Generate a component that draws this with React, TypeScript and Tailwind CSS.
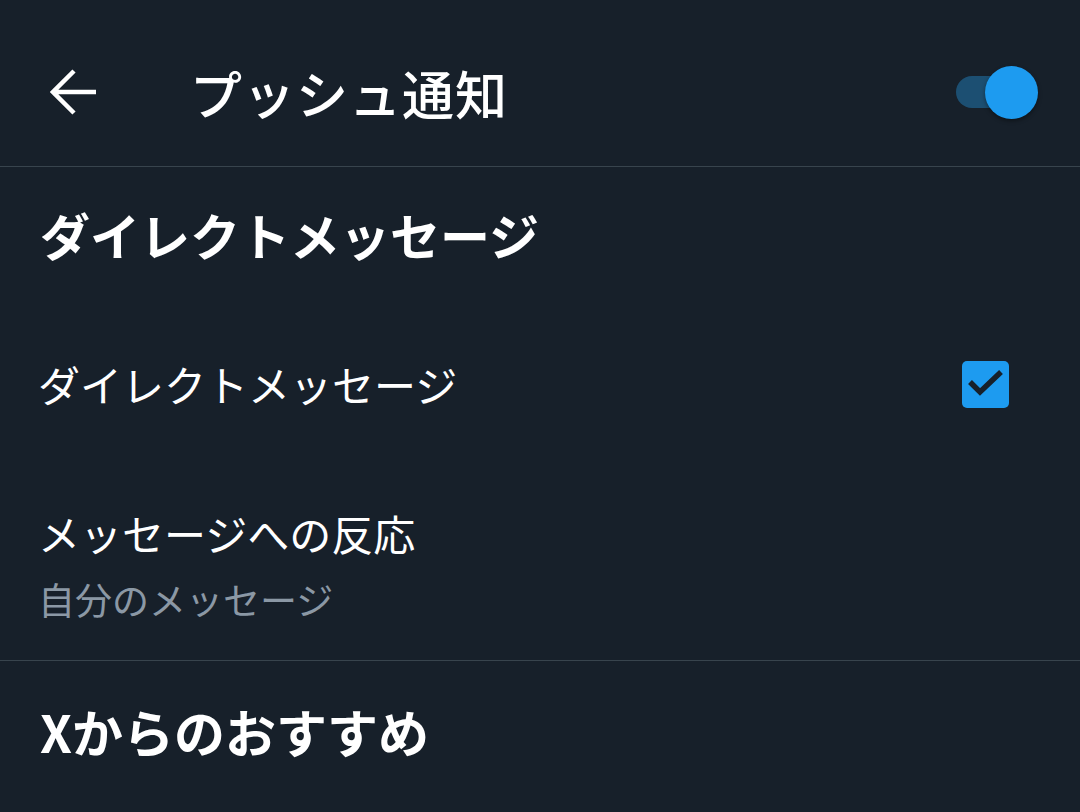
import React from "react";

const font = { fontFamily: '"Noto Sans CJK JP", "Noto Sans", sans-serif' };

export default function App() {
  return (
    <div className="w-[1080px] h-[812px] overflow-hidden bg-[#17202a] text-white" style={font}>
      <header className="flex items-center h-[167px] pt-[20px] border-b border-[#38444d] pl-[50px] pr-[42px]">
        <svg width="48" height="48" viewBox="0 0 48 48" className="shrink-0">
          <path d="M3 23 H46 M24 2 L3 23 L24 44" fill="none" stroke="white" strokeWidth="4.5" strokeLinecap="butt" strokeLinejoin="miter" />
        </svg>
        <h1 className="ml-[92px] text-[52px] leading-[60px] font-medium tracking-[1px]">プッシュ通知</h1>
        <div className="ml-auto relative w-[82px] h-[54px] flex items-center">
          <div className="absolute left-0 right-[8px] top-[10px] h-[32px] rounded-full bg-[#1c4f72]" />
          <div className="absolute right-0 top-0 w-[53px] h-[53px] rounded-full bg-[#1d9bf0] shadow-[0_2px_4px_rgba(0,0,0,0.4)]" />
        </div>
      </header>

      <section className="h-[134px] flex items-center px-[40px]">
        <h2 className="text-[50px] leading-[60px] font-bold">ダイレクトメッセージ</h2>
      </section>

      <div className="h-[166px] flex items-center pl-[38px] pr-[71px]">
        <span className="text-[42px] leading-[56px]">ダイレクトメッセージ</span>
        <div className="ml-auto w-[47px] h-[47px] rounded-[5px] bg-[#1d9bf0] flex items-center justify-center">
          <svg width="38" height="30" viewBox="0 0 38 30">
            <path d="M3 13 L13 23 L34 3" fill="none" stroke="#17202a" strokeWidth="5.5" />
          </svg>
        </div>
      </div>

      <div className="flex flex-col pl-[38px] pt-[38px] pb-[37px] border-b border-[#38444d]">
        <span className="text-[42px] leading-[56px]">メッセージへの反応</span>
        <span className="mt-[14px] text-[37px] leading-[48px] text-[#8b98a5]">自分のメッセージ</span>
      </div>

      <section className="h-[140px] flex items-center px-[40px]">
        <h2 className="text-[51px] leading-[60px] font-bold">Xからのおすすめ</h2>
      </section>
    </div>
  );
}
